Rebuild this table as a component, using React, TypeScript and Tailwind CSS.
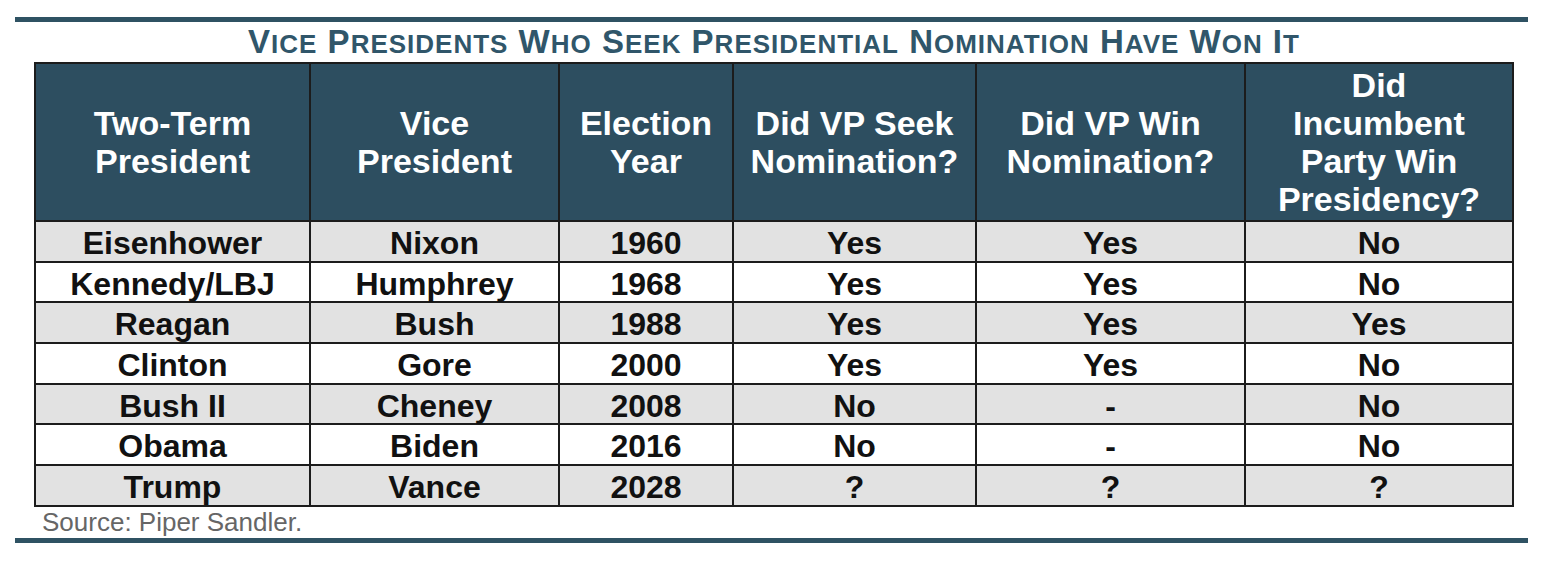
const rows = [
  ['Eisenhower', 'Nixon', '1960', 'Yes', 'Yes', 'No'],
  ['Kennedy/LBJ', 'Humphrey', '1968', 'Yes', 'Yes', 'No'],
  ['Reagan', 'Bush', '1988', 'Yes', 'Yes', 'Yes'],
  ['Clinton', 'Gore', '2000', 'Yes', 'Yes', 'No'],
  ['Bush II', 'Cheney', '2008', 'No', '-', 'No'],
  ['Obama', 'Biden', '2016', 'No', '-', 'No'],
  ['Trump', 'Vance', '2028', '?', '?', '?'],
];

const headers = [
  ['Two-Term', 'President'],
  ['Vice', 'President'],
  ['Election', 'Year'],
  ['Did VP Seek', 'Nomination?'],
  ['Did VP Win', 'Nomination?'],
  ['Did', 'Incumbent', 'Party Win', 'Presidency?'],
];

const widths = ['w-[275px]', 'w-[249px]', 'w-[174px]', 'w-[243px]', 'w-[269px]', 'w-[268px]'];

// Title words: first letter full size, the rest in small caps
const titleWords = ['Vice', 'Presidents', 'Who', 'Seek', 'Presidential', 'Nomination', 'Have', 'Won', 'It'];

function Title() {
  return (
    <div className="h-[40px] text-center leading-[40px] font-bold text-[#30566a] tracking-[1px] text-[33px]">
      {titleWords.map((w, i) => (
        <span key={i}>
          {i > 0 && ' '}
          {w[0]}
          <span className="text-[26px] uppercase">{w.slice(1)}</span>
        </span>
      ))}
    </div>
  );
}

export default function App() {
  return (
    <div
      className="w-[1548px] h-[562px] bg-white overflow-hidden pt-[17px]"
      style={{ fontFamily: '"Liberation Sans", Arial, sans-serif' }}
    >
      <div className="ml-[15px] w-[1513px] h-[5px] bg-[#2f5263]" />
      <Title />

      <table className="ml-[34px] border-collapse table-fixed w-[1478px]">
        <thead>
          <tr className="h-[158px] bg-[#2d4e60]">
            {headers.map((h, i) => (
              <th
                key={i}
                className={`${widths[i]} border-2 border-[#1c1c1c] text-white font-bold text-[34px] leading-[38px] align-middle`}
              >
                {h.map((line, j) => (
                  <div key={j}>{line}</div>
                ))}
              </th>
            ))}
          </tr>
        </thead>
        <tbody>
          {rows.map((r, i) => (
            <tr key={i} className={`h-[40.7px] ${i % 2 === 0 ? 'bg-[#e2e2e2]' : 'bg-white'}`}>
              {r.map((cell, j) => (
                <td
                  key={j}
                  className="border-2 border-[#1c1c1c] text-center text-[32px] leading-[33px] font-bold text-[#111] p-0 pt-[4px]"
                >
                  {cell}
                </td>
              ))}
            </tr>
          ))}
        </tbody>
      </table>

      <div className="pl-[42px] h-[31px] text-[26px] leading-[31px] text-[#666]">Source: Piper Sandler.</div>
      <div className="ml-[15px] w-[1513px] h-[5px] bg-[#2f5263]" />
    </div>
  );
}
